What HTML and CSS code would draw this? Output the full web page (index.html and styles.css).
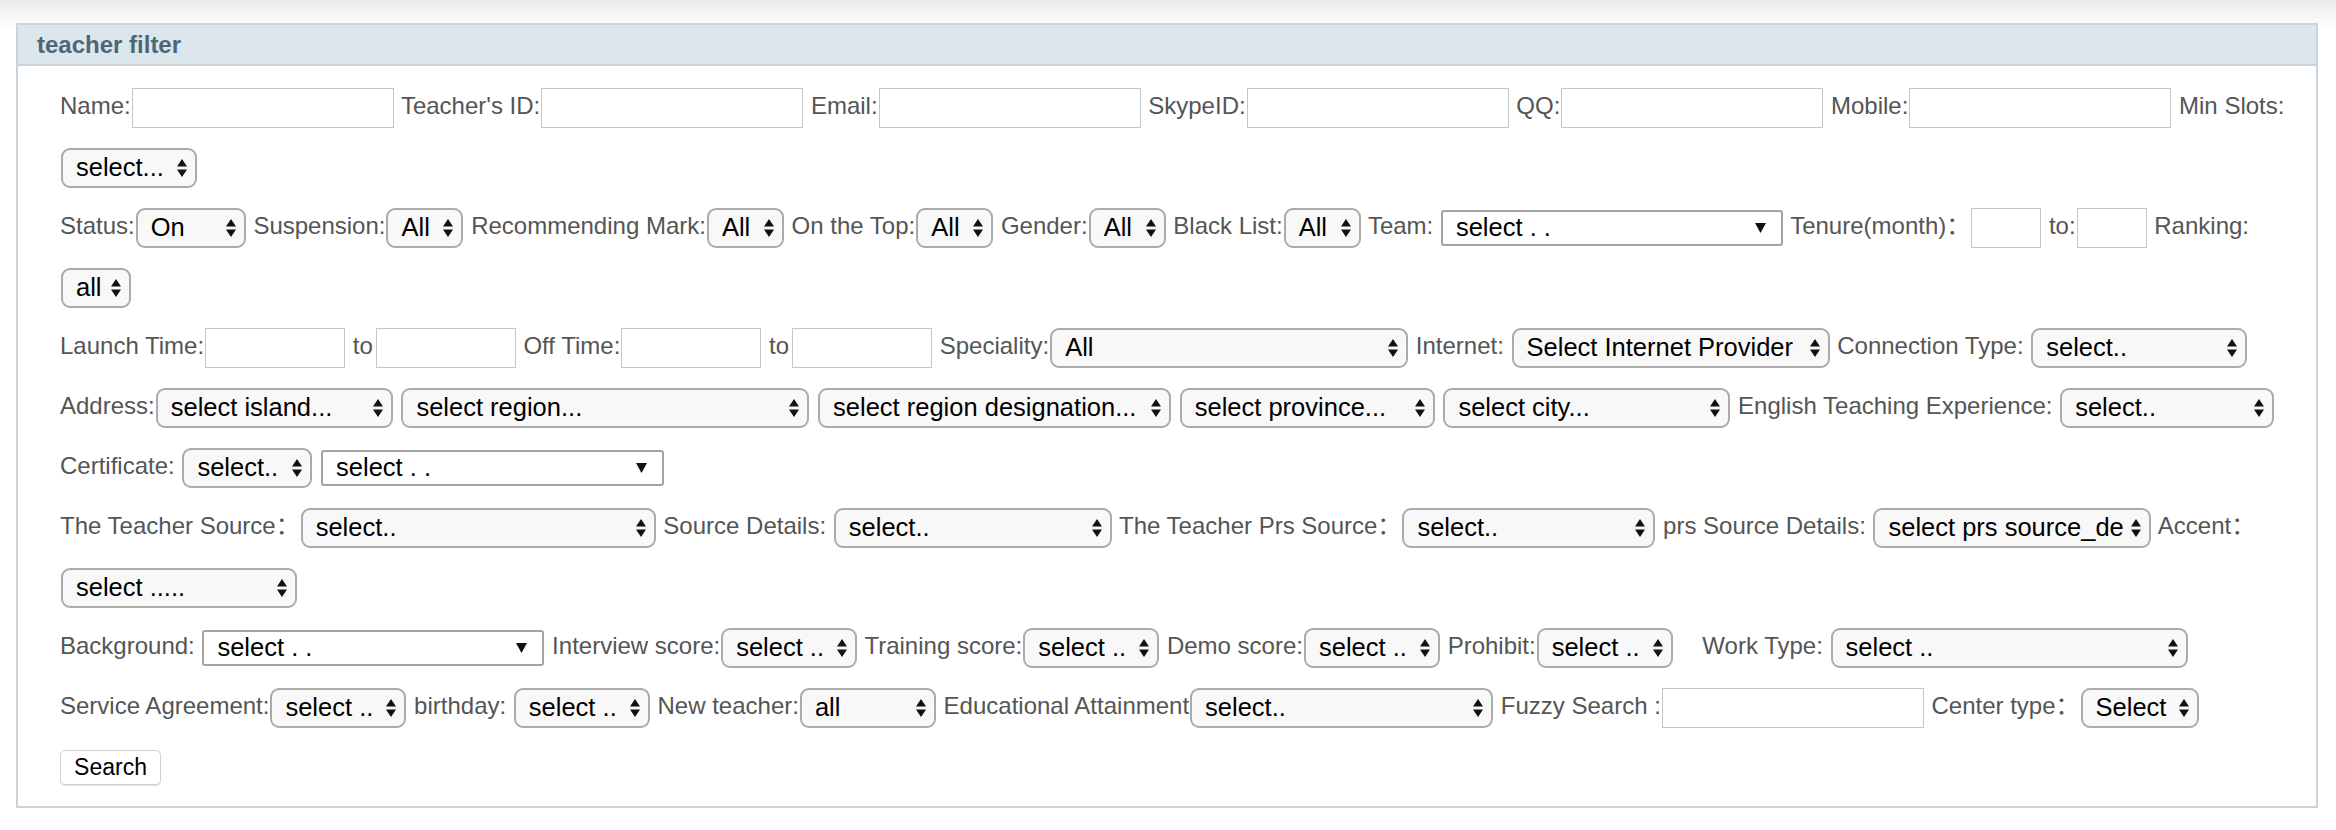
FILE: index.html
```html
<!DOCTYPE html>
<html lang="en">
<head>
<meta charset="utf-8">
<title>teacher filter</title>
<link rel="stylesheet" href="styles.css">
</head>
<body>
<div class="page">
  <section class="panel">
    <header class="panel-head">teacher filter</header>
    <form class="panel-body">
      <div class="line"><span class="lbl">Name:</span><input class="txt" type="text"> <span class="lbl">Teacher's ID:</span><input class="txt" type="text"> <span class="lbl">Email:</span><input class="txt" type="text"> <span class="lbl">SkypeID:</span><input class="txt" type="text"> <span class="lbl">QQ:</span><input class="txt" type="text"> <span class="lbl">Mobile:</span><input class="txt" type="text"> <span class="lbl">Min Slots:</span></div>

      <div class="line"><span class="sel w136"><span class="val">select...</span><svg class="ud" viewBox="0 0 10 18"><path d="M5 0L10 7.5H0Z M0 10.5H10L5 18Z"/></svg></span></div>

      <div class="line"><span class="lbl">Status:</span><span class="sel w110"><span class="val">On</span><svg class="ud" viewBox="0 0 10 18"><path d="M5 0L10 7.5H0Z M0 10.5H10L5 18Z"/></svg></span> <span class="lbl">Suspension:</span><span class="sel w77"><span class="val">All</span><svg class="ud" viewBox="0 0 10 18"><path d="M5 0L10 7.5H0Z M0 10.5H10L5 18Z"/></svg></span> <span class="lbl">Recommending Mark:</span><span class="sel w77"><span class="val">All</span><svg class="ud" viewBox="0 0 10 18"><path d="M5 0L10 7.5H0Z M0 10.5H10L5 18Z"/></svg></span> <span class="lbl">On the Top:</span><span class="sel w77"><span class="val">All</span><svg class="ud" viewBox="0 0 10 18"><path d="M5 0L10 7.5H0Z M0 10.5H10L5 18Z"/></svg></span> <span class="lbl">Gender:</span><span class="sel w77"><span class="val">All</span><svg class="ud" viewBox="0 0 10 18"><path d="M5 0L10 7.5H0Z M0 10.5H10L5 18Z"/></svg></span> <span class="lbl">Black List:</span><span class="sel w77"><span class="val">All</span><svg class="ud" viewBox="0 0 10 18"><path d="M5 0L10 7.5H0Z M0 10.5H10L5 18Z"/></svg></span> <span class="lbl">Team:</span> <span class="drop w342"><span class="val">select . .</span><svg class="dn" viewBox="0 0 11 10"><path d="M0 0H11L5.5 10Z"/></svg></span> <span class="lbl">Tenure(month)：</span><input class="txt w70" type="text"> <span class="lbl">to:</span><input class="txt w70" type="text"> <span class="lbl">Ranking:</span></div>

      <div class="line"><span class="sel w70"><span class="val">all</span><svg class="ud" viewBox="0 0 10 18"><path d="M5 0L10 7.5H0Z M0 10.5H10L5 18Z"/></svg></span></div>

      <div class="line"><span class="lbl">Launch Time:</span><input class="txt w140" type="text"> <span class="lbl">to</span><input class="txt w140 gap-to" type="text"> <span class="lbl">Off Time:</span><input class="txt w140" type="text"> <span class="lbl">to</span><input class="txt w140 gap-to" type="text"> <span class="lbl">Speciality:</span><span class="sel w358"><span class="val">All</span><svg class="ud" viewBox="0 0 10 18"><path d="M5 0L10 7.5H0Z M0 10.5H10L5 18Z"/></svg></span> <span class="lbl">Internet:</span> <span class="sel w318"><span class="val">Select Internet Provider</span><svg class="ud" viewBox="0 0 10 18"><path d="M5 0L10 7.5H0Z M0 10.5H10L5 18Z"/></svg></span> <span class="lbl">Connection Type:</span> <span class="sel w216"><span class="val">select..</span><svg class="ud" viewBox="0 0 10 18"><path d="M5 0L10 7.5H0Z M0 10.5H10L5 18Z"/></svg></span></div>

      <div class="line"><span class="lbl">Address:</span><span class="sel w237"><span class="val">select island...</span><svg class="ud" viewBox="0 0 10 18"><path d="M5 0L10 7.5H0Z M0 10.5H10L5 18Z"/></svg></span> <span class="sel w408"><span class="val">select region...</span><svg class="ud" viewBox="0 0 10 18"><path d="M5 0L10 7.5H0Z M0 10.5H10L5 18Z"/></svg></span> <span class="sel w353"><span class="val">select region designation...</span><svg class="ud" viewBox="0 0 10 18"><path d="M5 0L10 7.5H0Z M0 10.5H10L5 18Z"/></svg></span> <span class="sel w255"><span class="val">select province...</span><svg class="ud" viewBox="0 0 10 18"><path d="M5 0L10 7.5H0Z M0 10.5H10L5 18Z"/></svg></span> <span class="sel w287"><span class="val">select city...</span><svg class="ud" viewBox="0 0 10 18"><path d="M5 0L10 7.5H0Z M0 10.5H10L5 18Z"/></svg></span> <span class="lbl">English Teaching Experience:</span> <span class="sel w214"><span class="val">select..</span><svg class="ud" viewBox="0 0 10 18"><path d="M5 0L10 7.5H0Z M0 10.5H10L5 18Z"/></svg></span></div>

      <div class="line"><span class="lbl">Certificate:</span> <span class="sel w130"><span class="val">select..</span><svg class="ud" viewBox="0 0 10 18"><path d="M5 0L10 7.5H0Z M0 10.5H10L5 18Z"/></svg></span> <span class="drop w343"><span class="val">select . .</span><svg class="dn" viewBox="0 0 11 10"><path d="M0 0H11L5.5 10Z"/></svg></span></div>

      <div class="line"><span class="lbl">The Teacher Source：</span><span class="sel w355"><span class="val">select..</span><svg class="ud" viewBox="0 0 10 18"><path d="M5 0L10 7.5H0Z M0 10.5H10L5 18Z"/></svg></span> <span class="lbl">Source Details:</span> <span class="sel w278"><span class="val">select..</span><svg class="ud" viewBox="0 0 10 18"><path d="M5 0L10 7.5H0Z M0 10.5H10L5 18Z"/></svg></span> <span class="lbl">The Teacher Prs Source：</span><span class="sel w253"><span class="val">select..</span><svg class="ud" viewBox="0 0 10 18"><path d="M5 0L10 7.5H0Z M0 10.5H10L5 18Z"/></svg></span> <span class="lbl">prs Source Details:</span> <span class="sel w278"><span class="val">select prs source_de</span><svg class="ud" viewBox="0 0 10 18"><path d="M5 0L10 7.5H0Z M0 10.5H10L5 18Z"/></svg></span> <span class="lbl">Accent：</span></div>

      <div class="line"><span class="sel w236"><span class="val">select .....</span><svg class="ud" viewBox="0 0 10 18"><path d="M5 0L10 7.5H0Z M0 10.5H10L5 18Z"/></svg></span></div>

      <div class="line"><span class="lbl">Background:</span> <span class="drop w342"><span class="val">select . .</span><svg class="dn" viewBox="0 0 11 10"><path d="M0 0H11L5.5 10Z"/></svg></span> <span class="lbl">Interview score:</span><span class="sel w136"><span class="val">select ..</span><svg class="ud" viewBox="0 0 10 18"><path d="M5 0L10 7.5H0Z M0 10.5H10L5 18Z"/></svg></span> <span class="lbl">Training score:</span><span class="sel w136"><span class="val">select ..</span><svg class="ud" viewBox="0 0 10 18"><path d="M5 0L10 7.5H0Z M0 10.5H10L5 18Z"/></svg></span> <span class="lbl">Demo score:</span><span class="sel w136"><span class="val">select ..</span><svg class="ud" viewBox="0 0 10 18"><path d="M5 0L10 7.5H0Z M0 10.5H10L5 18Z"/></svg></span> <span class="lbl">Prohibit:</span><span class="sel w136"><span class="val">select ..</span><svg class="ud" viewBox="0 0 10 18"><path d="M5 0L10 7.5H0Z M0 10.5H10L5 18Z"/></svg></span> <span class="lbl gap-left">Work Type:</span> <span class="sel w357"><span class="val">select ..</span><svg class="ud" viewBox="0 0 10 18"><path d="M5 0L10 7.5H0Z M0 10.5H10L5 18Z"/></svg></span></div>

      <div class="line"><span class="lbl">Service Agreement:</span><span class="sel w136"><span class="val">select ..</span><svg class="ud" viewBox="0 0 10 18"><path d="M5 0L10 7.5H0Z M0 10.5H10L5 18Z"/></svg></span> <span class="lbl">birthday:</span> <span class="sel w136"><span class="val">select ..</span><svg class="ud" viewBox="0 0 10 18"><path d="M5 0L10 7.5H0Z M0 10.5H10L5 18Z"/></svg></span> <span class="lbl">New teacher:</span><span class="sel w136"><span class="val">all</span><svg class="ud" viewBox="0 0 10 18"><path d="M5 0L10 7.5H0Z M0 10.5H10L5 18Z"/></svg></span> <span class="lbl">Educational Attainment</span><span class="sel w303"><span class="val">select..</span><svg class="ud" viewBox="0 0 10 18"><path d="M5 0L10 7.5H0Z M0 10.5H10L5 18Z"/></svg></span> <span class="lbl">Fuzzy Search :</span><input class="txt" type="text"> <span class="lbl">Center type：</span><span class="sel w118"><span class="val">Select</span><svg class="ud" viewBox="0 0 10 18"><path d="M5 0L10 7.5H0Z M0 10.5H10L5 18Z"/></svg></span></div>

      <div class="line"><button class="btn" type="button">Search</button></div>
    </form>
  </section>
</div>
</body>
</html>
```

FILE: styles.css
```css
* {
  box-sizing: border-box;
}

html, body {
  margin: 0;
  background: #fff;
}

body {
  font-family: "Liberation Sans", Arial, "Noto Sans CJK SC", sans-serif;
  background: linear-gradient(#ebebeb 0, #f5f5f5 14px, #fff 30px) no-repeat;
  min-height: 830px;
}

.page {
  padding: 23px 18px 22px 16px;
}

.panel {
  border: 2px solid #c9d4dd;
  background: #fff;
}

.panel-head {
  height: 41px;
  line-height: 39px;
  padding-left: 19px;
  background: #dce6ed;
  border-bottom: 2px solid #c9d4dd;
  color: #4f6677;
  font-weight: bold;
  font-size: 24px;
}

.panel-body {
  margin: 0;
  padding: 10px 0 10px 42px;
}

.line {
  height: 60px;
  line-height: 60px;
  white-space: nowrap;
  font-size: 24px;
  color: #555;
}

.lbl {
  color: #555;
}

.gap-left {
  margin-left: 22px;
}

.txt {
  display: inline-block;
  width: 262px;
  height: 40px;
  margin: 0 1px;
  padding: 0 6px;
  border: 1px solid #c6c6c6;
  border-radius: 0;
  background: #fff;
  vertical-align: middle;
  font: inherit;
}

.txt.gap-to {
  margin-left: 3px;
}

.w70 { width: 70px; }
.w77 { width: 77px; }
.w110 { width: 110px; }
.w118 { width: 118px; }
.w130 { width: 130px; }
.w136 { width: 136px; }
.w140 { width: 140px; }
.w214 { width: 214px; }
.w216 { width: 216px; }
.w236 { width: 236px; }
.w237 { width: 237px; }
.w253 { width: 253px; }
.w255 { width: 255px; }
.w278 { width: 278px; }
.w287 { width: 287px; }
.w303 { width: 303px; }
.w318 { width: 318px; }
.w342 { width: 342px; }
.w343 { width: 343px; }
.w353 { width: 353px; }
.w355 { width: 355px; }
.w357 { width: 357px; }
.w358 { width: 358px; }
.w408 { width: 408px; }

.sel {
  display: inline-flex;
  align-items: center;
  justify-content: space-between;
  gap: 3px;
  height: 40px;
  margin: 0 1px;
  padding: 0 8px 0 13px;
  border: 2px solid #ababab;
  border-radius: 9px;
  background: #f8f8f8;
  color: #000;
  font-size: 25.5px;
  line-height: 1.2;
  vertical-align: middle;
}

.drop {
  display: inline-flex;
  align-items: center;
  justify-content: space-between;
  height: 36px;
  margin: 0 1px;
  padding: 0 15px 0 13px;
  border: 2px solid #a3a3a3;
  border-radius: 3px;
  background: #fff;
  color: #000;
  font-size: 25.5px;
  line-height: 1.2;
  vertical-align: middle;
}

.val {
  flex: 0 1 auto;
  white-space: nowrap;
}

.ud {
  width: 10px;
  height: 18px;
  flex: none;
  fill: #111;
}

.dn {
  width: 11px;
  height: 10px;
  flex: none;
  fill: #111;
}

.btn {
  display: inline-block;
  width: 101px;
  height: 35px;
  margin: 0;
  padding: 0;
  border: 1px solid #d0d0d0;
  border-radius: 5px;
  background: #fff;
  box-shadow: 0 1px 1px rgba(0, 0, 0, 0.12);
  color: #000;
  font-family: inherit;
  font-size: 23px;
  vertical-align: middle;
}
```
